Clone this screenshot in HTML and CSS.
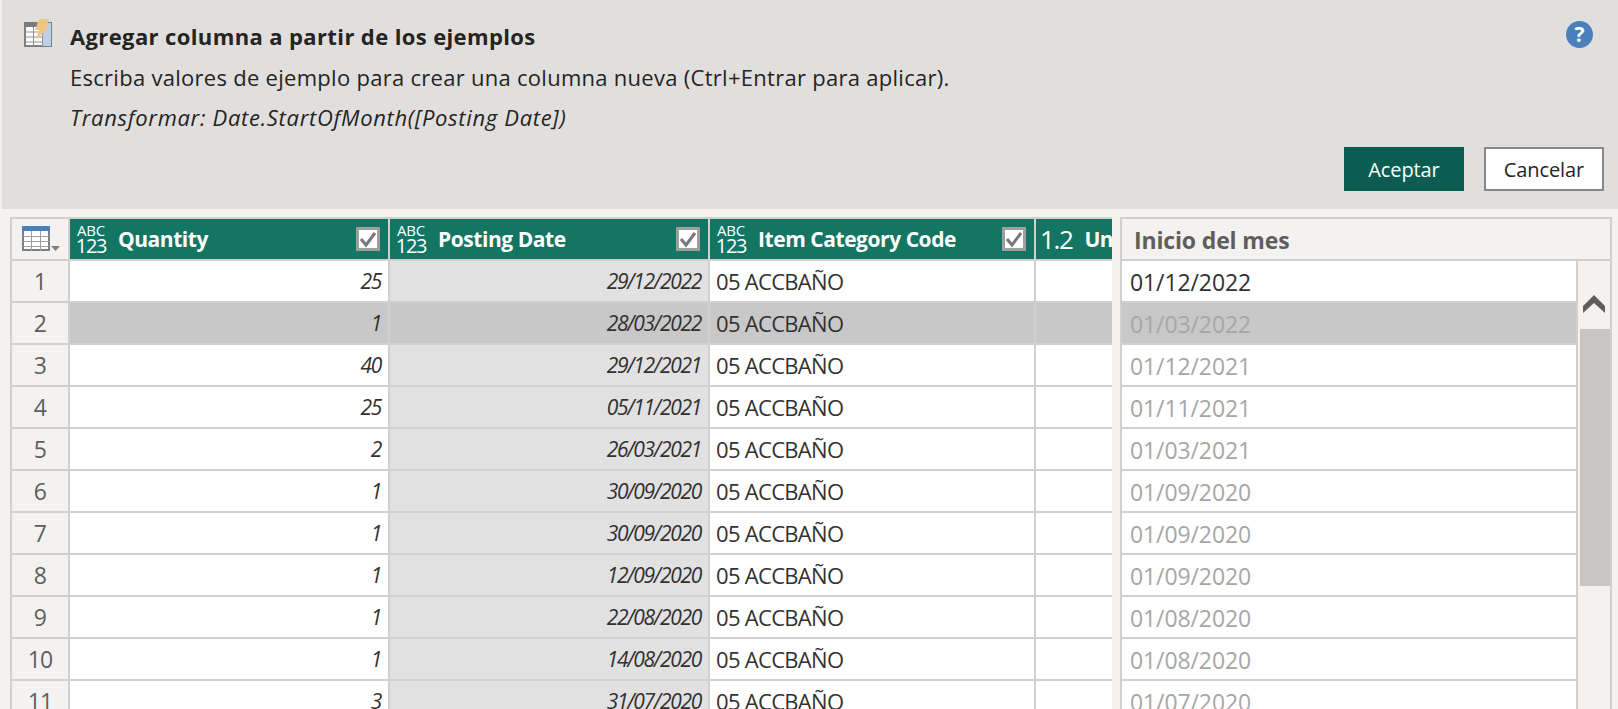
FILE: index.html
```html
<!DOCTYPE html>
<html lang="es">

<head>
    <meta charset="UTF-8">
    <meta name="viewport" content="width=device-width, initial-scale=1.0">
    <title>Agregar columna a partir de los ejemplos</title>
    <link rel="stylesheet" href="styles.css">
</head>

<body>
    <header class="dialog">
        <svg class="dialog-icon" width="30" height="30" viewBox="0 0 30 30">
            <rect x="2" y="4" width="26" height="23" fill="#fff" stroke="#7f7f7f" stroke-width="2"/>
            <rect x="1" y="3" width="21" height="5" fill="#7a7a7a"/>
            <rect x="20" y="4" width="8" height="23" fill="#bcd0e6"/>
            <path d="M2 13H20M2 18H20M2 23H20M10.500 8V27M19.500 8V27" stroke="#8f8f8f" fill="none"/>
            <path d="M16 0H26L23 8H26L13 21L16 11H12Z" fill="#eec680"/>
        </svg>
        <div class="dialog-text">
            <h1>Agregar columna a partir de los ejemplos</h1>
            <p>Escriba valores de ejemplo para crear una columna nueva (Ctrl+Entrar para aplicar).</p>
            <p class="transform">Transformar: Date.StartOfMonth([Posting Date])</p>
        </div>
        <div class="help">?</div>
        <div class="buttons">
            <button class="btn-ok" type="button">Aceptar</button>
            <button class="btn-cancel" type="button">Cancelar</button>
        </div>
    </header>

    <main class="content">
        <div class="table">
            <div class="row head">
                <div class="corner">
                    <svg width="38" height="26" viewBox="0 0 38 26">
                        <rect x="1" y="1" width="26" height="23" fill="#fff" stroke="#7f7f7f" stroke-width="2"/>
                        <rect x="0" y="0" width="28" height="5" fill="#4a7ebb"/>
                        <path d="M1 10.500H27M1 15.500H27M1 20.500H27M9.500 5V25M18.500 5V25" stroke="#a19f9d" fill="none"/>
                        <path d="M29 20H38L33.500 25Z" fill="#7f7f7f"/>
                    </svg>
                </div>
                <div class="col-head">
                    <span class="type"><span>ABC</span><span class="num">123</span></span>
                    <span class="col-name">Quantity</span>
                    <span class="check"><svg width="18" height="18" viewBox="0 0 18 18"><path d="M2 9L7 15L16 3" fill="none" stroke="#7a7978" stroke-width="3"/></svg></span>
                </div>
                <div class="col-head">
                    <span class="type"><span>ABC</span><span class="num">123</span></span>
                    <span class="col-name">Posting Date</span>
                    <span class="check"><svg width="18" height="18" viewBox="0 0 18 18"><path d="M2 9L7 15L16 3" fill="none" stroke="#7a7978" stroke-width="3"/></svg></span>
                </div>
                <div class="col-head">
                    <span class="type"><span>ABC</span><span class="num">123</span></span>
                    <span class="col-name">Item Category Code</span>
                    <span class="check"><svg width="18" height="18" viewBox="0 0 18 18"><path d="M2 9L7 15L16 3" fill="none" stroke="#7a7978" stroke-width="3"/></svg></span>
                </div>
                <div class="col-head clipped">
                    <span class="decimal">1.2</span>
                    <span class="col-name">Unit</span>
                </div>
            </div>

            <div class="row"><div class="idx">1</div><div class="qty">25</div><div class="date">29/12/2022</div><div class="code">05 ACCBAÑO</div><div></div></div>
            <div class="row selected"><div class="idx">2</div><div class="qty">1</div><div class="date">28/03/2022</div><div class="code">05 ACCBAÑO</div><div></div></div>
            <div class="row"><div class="idx">3</div><div class="qty">40</div><div class="date">29/12/2021</div><div class="code">05 ACCBAÑO</div><div></div></div>
            <div class="row"><div class="idx">4</div><div class="qty">25</div><div class="date">05/11/2021</div><div class="code">05 ACCBAÑO</div><div></div></div>
            <div class="row"><div class="idx">5</div><div class="qty">2</div><div class="date">26/03/2021</div><div class="code">05 ACCBAÑO</div><div></div></div>
            <div class="row"><div class="idx">6</div><div class="qty">1</div><div class="date">30/09/2020</div><div class="code">05 ACCBAÑO</div><div></div></div>
            <div class="row"><div class="idx">7</div><div class="qty">1</div><div class="date">30/09/2020</div><div class="code">05 ACCBAÑO</div><div></div></div>
            <div class="row"><div class="idx">8</div><div class="qty">1</div><div class="date">12/09/2020</div><div class="code">05 ACCBAÑO</div><div></div></div>
            <div class="row"><div class="idx">9</div><div class="qty">1</div><div class="date">22/08/2020</div><div class="code">05 ACCBAÑO</div><div></div></div>
            <div class="row"><div class="idx">10</div><div class="qty">1</div><div class="date">14/08/2020</div><div class="code">05 ACCBAÑO</div><div></div></div>
            <div class="row"><div class="idx">11</div><div class="qty">3</div><div class="date">31/07/2020</div><div class="code">05 ACCBAÑO</div><div></div></div>
        </div>

        <div class="examples">
            <div class="examples-head">Inicio del mes</div>
            <div class="examples-body">
                <div class="examples-list">
                    <div class="example typed">01/12/2022</div>
                    <div class="example selected">01/03/2022</div>
                    <div class="example">01/12/2021</div>
                    <div class="example">01/11/2021</div>
                    <div class="example">01/03/2021</div>
                    <div class="example">01/09/2020</div>
                    <div class="example">01/09/2020</div>
                    <div class="example">01/09/2020</div>
                    <div class="example">01/08/2020</div>
                    <div class="example">01/08/2020</div>
                    <div class="example">01/07/2020</div>
                </div>
                <div class="scrollbar">
                    <svg width="22" height="18" viewBox="0 0 22 18"><path d="M0 18V11L11 0L22 11V18L11 8Z" fill="#605e5c"/></svg>
                    <div class="thumb"></div>
                </div>
            </div>
        </div>
    </main>
</body>

</html>
```

FILE: styles.css
```css
* {
    box-sizing: border-box;
}

html,
body {
    height: 100%;
}

body {
    margin: 0;
    height: 709px;
    overflow: hidden;
    background-color: #f3f2f1;
    color: #252423;
    font-family: "Open Sans", "Liberation Sans", sans-serif;
    display: flex;
    flex-direction: column;
}

.dialog {
    height: 209px;
    flex: none;
    background-color: #e1dfdd;
    border-left: 2px solid #f3f2f1;
    display: grid;
    grid-template-columns: 46px 1fr 27px;
    grid-template-rows: 138px 44px;
    column-gap: 0;
    padding: 19px 25px 0 19px;
}

.dialog-icon {
    display: block;
    margin-left: 2px;
}

.dialog-text {
    padding: 2px 0 0 3px;
}

.dialog-text h1 {
    margin: 0 0 11px;
    font-size: 22px;
    line-height: 30px;
    font-weight: 700;
    letter-spacing: 0.38px;
}

.dialog-text p {
    margin: 0 0 10px;
    font-size: 22px;
    line-height: 30px;
    letter-spacing: 0.28px;
}

.dialog-text .transform {
    font-style: italic;
    letter-spacing: 0.68px;
}

.help {
    width: 27px;
    height: 27px;
    margin-top: 2px;
    border-radius: 50%;
    background-color: #4a80bb;
    color: #fff;
    font-size: 21px;
    font-weight: 700;
    line-height: 27px;
    text-align: center;
}

.buttons {
    grid-column: 1 / 4;
    display: flex;
    justify-content: flex-end;
    gap: 20px;
    margin-right: -11px;
    margin-top: -10px;
}

.buttons button {
    width: 120px;
    height: 44px;
    font-family: inherit;
    font-size: 20px;
    letter-spacing: -0.1px;
    padding: 0;
}

.btn-ok {
    background-color: #0b5c51;
    color: #fff;
    border: none;
}

.btn-cancel {
    background-color: #fff;
    color: #252423;
    border: 2px solid #8a8886;
}

.content {
    flex: 1;
    min-height: 0;
    display: grid;
    grid-template-columns: 1102px 492px;
    column-gap: 8px;
    padding: 8px 0 0 10px;
    overflow: hidden;
}

.table {
    background-color: #d2d0ce;
    padding: 2px 0 0 2px;
    display: flex;
    flex-direction: column;
    gap: 2px;
    overflow: hidden;
}

.row {
    display: grid;
    grid-template-columns: 56px 318px 318px 324px 76px;
    column-gap: 2px;
    height: 40px;
    flex: none;
    font-size: 21px;
    line-height: 41px;
}

.row > div {
    background-color: #fff;
    white-space: nowrap;
    overflow: hidden;
}

.row .idx {
    background-color: #f3f2f1;
    color: #605e5c;
    text-align: center;
    font-size: 23px;
    letter-spacing: -0.8px;
}

.row .qty,
.row .date {
    font-style: italic;
    text-align: right;
    padding-right: 7px;
    letter-spacing: -1.3px;
    color: #323130;
}

.row .date {
    background-color: #e1e1e1;
}

.row .code {
    padding-left: 6px;
    font-size: 22px;
    letter-spacing: -0.7px;
    color: #323130;
}

.row.selected > div:not(.idx) {
    background-color: #c8c8c8;
}

.row.head > div {
    background-color: #127663;
}

.row.head {
    color: #fff;
}

.row.head .corner {
    background-color: #f3f2f1;
    padding: 7px 0 0 10px;
}

.corner svg {
    display: block;
}

.col-head {
    display: flex;
    align-items: center;
    padding: 0 8px 0 6px;
}

.type {
    width: 30px;
    flex: none;
    display: flex;
    flex-direction: column;
    align-items: center;
    padding-bottom: 1px;
    font-size: 15px;
    line-height: 13px;
    letter-spacing: -0.2px;
}

.type .num {
    margin-top: 1px;
    font-size: 20px;
    line-height: 16px;
    letter-spacing: -1.2px;
}

.col-name {
    margin-left: 12px;
    font-size: 21px;
    font-weight: 700;
    letter-spacing: -0.45px;
}

.check {
    margin-left: auto;
    width: 24px;
    height: 24px;
    flex: none;
    background-color: #fff;
    border: 3px solid #a19f9d;
}

.check svg {
    display: block;
}

.col-head.clipped {
    padding-left: 4px;
}

.decimal {
    font-size: 26px;
    letter-spacing: -1.4px;
}

.clipped .col-name {
    margin-left: 12px;
}

.examples {
    background-color: #d2d0ce;
    padding: 2px;
    display: flex;
    flex-direction: column;
    gap: 2px;
    height: 600px;
}

.examples-head {
    height: 40px;
    flex: none;
    background-color: #f3f2f1;
    color: #605e5c;
    font-size: 23px;
    font-weight: 700;
    line-height: 42px;
    padding-left: 12px;
    letter-spacing: -0.15px;
}

.examples-body {
    flex: 1;
    display: grid;
    grid-template-columns: 454px 2px 32px;
    background-color: #d2d0ce;
}

.examples-list {
    display: flex;
    flex-direction: column;
    gap: 2px;
    grid-column: 1;
}

.example {
    height: 40px;
    flex: none;
    background-color: #fff;
    color: #a8a6a4;
    font-size: 23px;
    line-height: 43px;
    padding-left: 8px;
    letter-spacing: -0.1px;
}

.example.typed {
    color: #323130;
}

.example.selected {
    background-color: #c8c8c8;
    color: #a8a6a4;
}

.scrollbar {
    grid-column: 3;
    background-color: #f3f2f1;
    display: flex;
    flex-direction: column;
    align-items: center;
    padding-top: 34px;
}

.scrollbar svg {
    display: block;
}

.thumb {
    width: 30px;
    height: 257px;
    margin-top: 16px;
    margin-left: 2px;
    background-color: #c8c6c4;
}
```
